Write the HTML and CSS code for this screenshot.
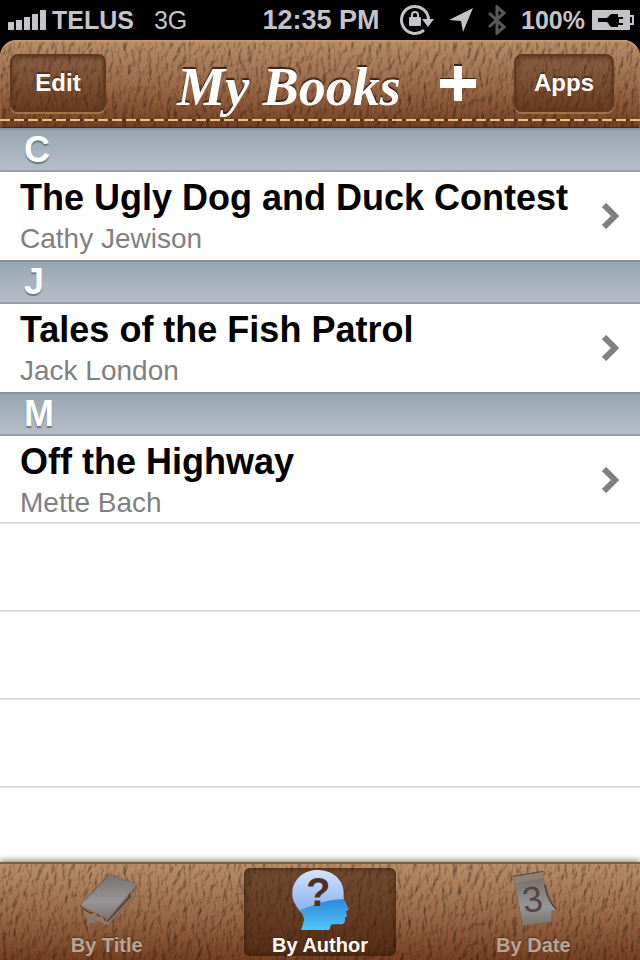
FILE: index.html
```html
<!DOCTYPE html>
<html lang="en">
<head>
  <meta charset="UTF-8" />
  <meta name="viewport" content="width=device-width, initial-scale=1.0" />
  <title>My Books</title>
  <link rel="stylesheet" href="styles.css">
</head>
<body>
  <!-- Leather grain, used by the nav bar and the tab bar -->
  <svg class="defs" width="0" height="0" aria-hidden="true">
    <filter id="leather" x="0" y="0" width="100%" height="100%" color-interpolation-filters="sRGB">
      <feTurbulence type="fractalNoise" baseFrequency="0.2 0.1" numOctaves="3" seed="8" result="noise" />
      <feDiffuseLighting in="noise" surfaceScale="2" diffuseConstant="1.15" lighting-color="#ffffff" result="light">
        <feDistantLight azimuth="215" elevation="58" />
      </feDiffuseLighting>
      <feComposite in="SourceGraphic" in2="light" operator="arithmetic" k1="0.75" k2="0.27" k3="0" k4="0" />
    </filter>
  </svg>

  <!-- Status Bar -->
  <div class="status-bar">
    <div class="status-left">
      <svg class="signal" width="38" height="20" viewBox="0 0 38 20" fill="#c4c3c8">
        <path d="M0 12h6v8H0zM8 10h6v10H8zM16 7h6v13h-6zM24 4h6v16h-6zM32 0h6v20h-6z" />
      </svg>
      <span class="carrier">TELUS</span>
      <span class="network">3G</span>
    </div>
    <span class="clock">12:35 PM</span>
    <div class="status-right">
      <svg width="34" height="32" viewBox="0 0 34 32">
        <path d="M24 26A13.500 13.500 0 1 1 28.500 16" fill="none" stroke="#c4c3c8" stroke-width="3" />
        <path d="M22 15h12l-6 8z" fill="#c4c3c8" />
        <rect x="9" y="13" width="12" height="9" rx="1" fill="#c4c3c8" />
        <path d="M12 14v-3a3 3 0 0 1 6 0v3" fill="none" stroke="#c4c3c8" stroke-width="2" />
      </svg>
      <svg width="24" height="24" viewBox="0 0 24 24">
        <path d="M24 0 14 24l-2-11L0 12z" fill="#c4c3c8" />
      </svg>
      <svg width="18" height="30" viewBox="0 0 18 30">
        <path d="M1 8l15 14-7 6V2l7 6L1 22" fill="none" stroke="#59595c" stroke-width="3" />
      </svg>
      <span class="battery-level">100%</span>
      <svg class="battery" width="42" height="20" viewBox="0 0 42 20">
        <rect width="38" height="20" rx="1" fill="#c4c3c8" />
        <path d="M38 6h3v8h-3" fill="none" stroke="#c4c3c8" stroke-width="2" />
        <path d="M6 8h8c3 0 3-4 6-4h6v3h5v2h-4v4h4v2h-5v2h-6c-3 0-3-5-6-5H6z" fill="#050505" />
      </svg>
    </div>
  </div>

  <!-- Navigation Bar -->
  <header class="nav-bar leather">
    <button class="nav-btn edit-btn" type="button">Edit</button>
    <h1 class="nav-title">My Books</h1>
    <button class="add-btn" type="button" aria-label="Add book">
      <svg width="36" height="38" viewBox="0 0 36 38">
        <path d="M14 0h8v14h14v8H22v14h-8V22H0v-8h14z" fill="#3f220e" />
        <path d="M14 2h8v13h14v9H22v13h-8V24H0v-9h14z" fill="#fff" />
      </svg>
    </button>
    <button class="nav-btn apps-btn" type="button">Apps</button>
  </header>

  <!-- Book List -->
  <main class="book-list">
    <section>
      <h2 class="section-title">C</h2>
      <a class="book" href="#ugly-dog">
        <span class="book-text">
          <span class="book-title">The Ugly Dog and Duck Contest</span>
          <span class="book-author">Cathy Jewison</span>
        </span>
        <svg class="chevron" width="18" height="26" viewBox="0 0 18 26"><path d="M2 2l11 11L2 24" /></svg>
      </a>
    </section>
    <section>
      <h2 class="section-title">J</h2>
      <a class="book" href="#fish-patrol">
        <span class="book-text">
          <span class="book-title">Tales of the Fish Patrol</span>
          <span class="book-author">Jack London</span>
        </span>
        <svg class="chevron" width="18" height="26" viewBox="0 0 18 26"><path d="M2 2l11 11L2 24" /></svg>
      </a>
    </section>
    <section>
      <h2 class="section-title">M</h2>
      <a class="book" href="#off-the-highway">
        <span class="book-text">
          <span class="book-title">Off the Highway</span>
          <span class="book-author">Mette Bach</span>
        </span>
        <svg class="chevron" width="18" height="26" viewBox="0 0 18 26"><path d="M2 2l11 11L2 24" /></svg>
      </a>
    </section>
    <div class="empty-rows"></div>
  </main>

  <!-- Tab Bar -->
  <nav class="tab-bar leather">
    <a class="tab" href="#title">
      <svg class="tab-icon" width="60" height="64" viewBox="231 54 180 192">
        <defs>
          <linearGradient id="grey" x1="0" y1="0" x2="0" y2="1">
            <stop offset="0" stop-color="#77726f" />
            <stop offset="0.6" stop-color="#979696" />
            <stop offset="1" stop-color="#7c736c" />
          </linearGradient>
        </defs>
        <path d="M326 70l86 30-6 40-84 84-30-10-20 6-8-14-26-38z" fill="#5d4a3b" opacity="0.4" />
        <path d="M244 172l76 38 84-86v12l-82 90-28-12-30 10-4-20z" fill="#827871" />
        <path d="M250 172l70 36-4 11-24-10-8-9-12 3-18-12z" fill="#a27452" />
        <path d="M249 176l24 14 10-8 12 16 12-3 10 18" fill="none" stroke="#4e4239" stroke-width="4" />
        <path d="M330 75l81 28-89 105-80-42z" fill="url(#grey)" />
        <path d="M322 215l70-77" stroke="#463a32" stroke-width="4" />
      </svg>
      <span class="tab-label">By Title</span>
    </a>
    <a class="tab selected" href="#author" aria-current="page">
      <svg class="tab-icon" width="60" height="64" viewBox="208 54 180 192">
        <defs>
          <linearGradient id="head" x1="0" y1="0" x2="0" y2="1">
            <stop offset="0" stop-color="#dde6fa" />
            <stop offset="0.6" stop-color="#8fb6ef" />
          </linearGradient>
          <linearGradient id="glow" x1="0" y1="0" x2="0" y2="1">
            <stop offset="0" stop-color="#2c88dc" />
            <stop offset="1" stop-color="#56cdfb" />
          </linearGradient>
          <clipPath id="head-shape">
            <path d="M290 60c46 0 78 28 79 68 0 13-1 19 3 26l12 24-8 6 2 14-5 5c1 16-6 21-20 19l-22 1-6 17h-84c9-23 13-34 4-49-18-20-31-39-30-63 2-40 34-68 75-68z" />
          </clipPath>
        </defs>
        <g clip-path="url(#head-shape)">
          <path d="M200 50h190v200H200z" fill="url(#head)" />
          <path d="M200 184c50 6 80-38 190-38v104H200z" fill="url(#glow)" />
        </g>
        <text class="head-mark" x="293" y="167">?</text>
      </svg>
      <span class="tab-label">By Author</span>
    </a>
    <a class="tab" href="#date">
      <svg class="tab-icon" width="60" height="64" viewBox="243 54 180 192">
        <path d="M272 78l92-16 4 40 18 42 22 36-18 4 2 30-92 16-16-76z" fill="#7b6959" opacity="0.7" />
        <path d="M275 80l88-14 3 18-86 17z" fill="#8f8074" />
        <path d="M280 103l86-16c4 42 14 68 37 91l-15 6v31l-85 10z" fill="url(#grey)" />
        <path d="M368 104c6 34 16 56 35 74" fill="none" stroke="#4f4035" stroke-width="4" />
        <path d="M274 79l90-15" stroke="#59483a" stroke-width="3" />
        <text class="date-mark" x="332" y="185" transform="rotate(-8 332 150)">3</text>
      </svg>
      <span class="tab-label">By Date</span>
    </a>
  </nav>
</body>
</html>
```
FILE: styles.css
```css
* {
  box-sizing: border-box;
}
body {
  margin: 0;
  min-height: 100vh;
  display: flex;
  flex-direction: column;
  background-color: #000;
  font-family: "Liberation Sans", Arial, sans-serif;
}
a {
  color: inherit;
  text-decoration: none;
}
button {
  font-family: inherit;
  cursor: pointer;
}
.defs {
  position: absolute;
}

/* Status bar */
.status-bar {
  height: 40px;
  padding: 0 6px 0 8px;
  display: grid;
  grid-template-columns: 1fr auto 1fr;
  align-items: center;
  color: #c4c3c8;
  font-size: 25px;
  font-weight: bold;
}
.status-left, .status-right {
  display: flex;
  align-items: center;
}
.signal {
  margin-right: 6px;
}
.network {
  margin-left: 20px;
  font-size: 25px;
  font-weight: normal;
}
.clock {
  font-size: 27px;
}
.status-right {
  justify-content: flex-end;
  gap: 15px;
}
.battery {
  margin-left: -8px;
}

/* Leather bars */
.leather {
  position: relative;
  isolation: isolate;
  overflow: hidden;
}
.leather::before {
  content: "";
  position: absolute;
  inset: 0;
  z-index: -1;
  background: linear-gradient(#b48a66, #9a6a48 50%, #743f22);
  filter: url(#leather);
}

/* Navigation bar */
.nav-bar {
  height: 88px;
  padding: 0 26px 2px 10px;
  display: flex;
  align-items: center;
  border-radius: 16px 16px 0 0;
  color: #fff;
}
.nav-bar::after {
  content: "";
  position: absolute;
  inset: 0;
  z-index: -1;
  border-radius: 16px 16px 0 0;
  box-shadow: inset 0 2px 2px #c69a70, inset 0 -1px 1px #4a2815;
  background: repeating-linear-gradient(90deg, #e5c680 0 10px, #59320f 10px 14px) 0 79px / 100% 2px no-repeat;
}
.nav-btn {
  height: 58px;
  padding: 0;
  border: 2px solid #5f3a1e;
  border-radius: 8px;
  background: linear-gradient(rgba(86, 48, 25, 0.4), rgba(72, 34, 13, 0.45));
  box-shadow: inset 0 2px 4px rgba(50, 24, 8, 0.5), 0 2px 0 rgba(190, 143, 87, 0.6);
  color: #fff;
  font-size: 24px;
  font-weight: bold;
  text-shadow: 0 -2px 1px #50301b;
}
.edit-btn {
  width: 96px;
}
.apps-btn {
  width: 100px;
}
.nav-title {
  flex: 1;
  margin: 0;
  padding: 8px 0 0 32px;
  font-family: "Snell Roundhand", "Liberation Serif", serif;
  font-size: 54px;
  font-style: italic;
  font-weight: bold;
  line-height: 56px;
  text-align: center;
  text-shadow: 0 -2px 1px #3f220e;
  white-space: nowrap;
}
.add-btn {
  display: flex;
  margin-right: 38px;
  padding: 0;
  border: none;
  background: none;
}

/* Book list */
.book-list {
  flex: 1;
  display: flex;
  flex-direction: column;
  background-color: #fff;
}
.section-title {
  height: 44px;
  margin: 0;
  padding: 0 24px;
  border-top: 2px solid #87939a;
  border-bottom: 2px solid #989ea7;
  background: linear-gradient(#96a7b0, #b6bdc9);
  color: #fff;
  font-size: 36px;
  line-height: 40px;
  text-shadow: 0 2px 1px #6c767f;
}
.book {
  height: 88px;
  padding: 0 20px;
  display: flex;
  align-items: center;
  justify-content: space-between;
}
.book-text {
  display: flex;
  flex-direction: column;
}
.book-title {
  color: #000;
  font-size: 36px;
  font-weight: bold;
  line-height: 46px;
}
.book-author {
  color: #808080;
  font-size: 28px;
  line-height: 36px;
}
.chevron {
  fill: none;
  stroke: #808080;
  stroke-width: 6;
}
.empty-rows {
  flex: 1;
  margin-top: -2px;
  background: repeating-linear-gradient(#e0e0e0 0 2px, #fff 2px 88px);
}

/* Tab bar */
.tab-bar {
  height: 98px;
  display: grid;
  grid-template-columns: repeat(3, 1fr);
  justify-items: center;
  align-items: center;
  overflow: visible;
  border-top: 2px solid #79603f;
  box-shadow: 0 -2px 6px rgba(80, 66, 40, 0.6);
}
.tab {
  width: 152px;
  height: 88px;
  display: flex;
  flex-direction: column;
  align-items: center;
  border-radius: 6px;
  color: #b8a596;
}
.tab.selected {
  background: rgba(58, 25, 7, 0.55);
  box-shadow: inset 0 0 6px #3a1e0e;
  color: #fff;
}
.tab-icon {
  flex-shrink: 0;
}
.tab-label {
  font-size: 20px;
  font-weight: bold;
  line-height: 26px;
  text-shadow: 0 -1px 1px rgba(60, 30, 12, 0.6);
}
.head-mark, .date-mark {
  font-family: "Liberation Sans", Arial, sans-serif;
  text-anchor: middle;
}
.head-mark {
  fill: #4b3124;
  font-size: 120px;
  font-weight: bold;
}
.date-mark {
  fill: #54463c;
  font-size: 108px;
}
```
